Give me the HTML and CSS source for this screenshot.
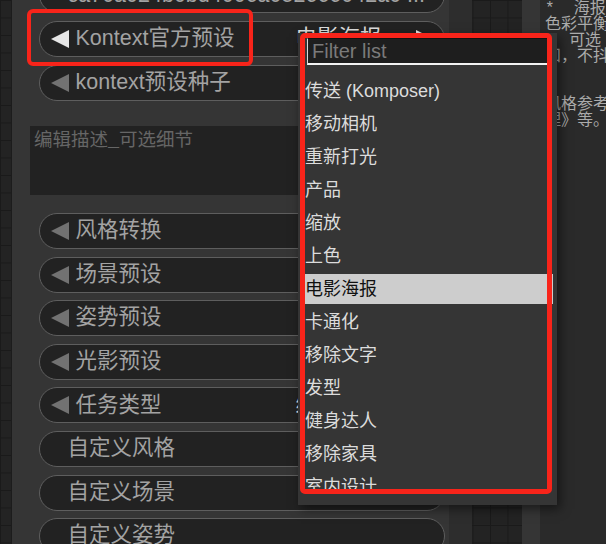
FILE: index.html
```html
<!DOCTYPE html>
<html lang="zh">
<head>
    <meta charset="UTF-8">
    <meta name="viewport" content="width=device-width, initial-scale=1.0">
    <title>Kontext 预设</title>
    <link rel="stylesheet" href="styles.css">
</head>
<body>
    <div class="canvas">
        <div class="node node-left">
            <div class="widget text-widget"><span class="label">ca70a024b0bd4006a052666042a0 ...</span></div>
            <div class="widget combo active">
                <svg class="arrow" viewBox="0 0 18 18"><polygon points="0,9 18,0 18,18"/></svg>
                <span class="label">Kontext官方预设</span>
                <span class="value">电影海报</span>
                <svg class="arrow arrow-right" viewBox="0 0 18 18"><polygon points="18,9 0,0 0,18"/></svg>
            </div>
            <div class="widget combo">
                <svg class="arrow" viewBox="0 0 18 18"><polygon points="0,9 18,0 18,18"/></svg>
                <span class="label">kontext预设种子</span>
                <span class="value">0</span>
                <svg class="arrow arrow-right" viewBox="0 0 18 18"><polygon points="18,9 0,0 0,18"/></svg>
            </div>
            <div class="textarea">编辑描述_可选细节</div>
            <div class="widget combo">
                <svg class="arrow" viewBox="0 0 18 18"><polygon points="0,9 18,0 18,18"/></svg>
                <span class="label">风格转换</span>
                <span class="value">无</span>
                <svg class="arrow arrow-right" viewBox="0 0 18 18"><polygon points="18,9 0,0 0,18"/></svg>
            </div>
            <div class="widget combo">
                <svg class="arrow" viewBox="0 0 18 18"><polygon points="0,9 18,0 18,18"/></svg>
                <span class="label">场景预设</span>
                <span class="value">无</span>
                <svg class="arrow arrow-right" viewBox="0 0 18 18"><polygon points="18,9 0,0 0,18"/></svg>
            </div>
            <div class="widget combo">
                <svg class="arrow" viewBox="0 0 18 18"><polygon points="0,9 18,0 18,18"/></svg>
                <span class="label">姿势预设</span>
                <span class="value">无</span>
                <svg class="arrow arrow-right" viewBox="0 0 18 18"><polygon points="18,9 0,0 0,18"/></svg>
            </div>
            <div class="widget combo">
                <svg class="arrow" viewBox="0 0 18 18"><polygon points="0,9 18,0 18,18"/></svg>
                <span class="label">光影预设</span>
                <span class="value">无</span>
                <svg class="arrow arrow-right" viewBox="0 0 18 18"><polygon points="18,9 0,0 0,18"/></svg>
            </div>
            <div class="widget combo">
                <svg class="arrow" viewBox="0 0 18 18"><polygon points="0,9 18,0 18,18"/></svg>
                <span class="label">任务类型</span>
                <span class="value">编辑图片</span>
                <svg class="arrow arrow-right" viewBox="0 0 18 18"><polygon points="18,9 0,0 0,18"/></svg>
            </div>
            <div class="widget text-widget"><span class="label">自定义风格</span></div>
            <div class="widget text-widget"><span class="label">自定义场景</span></div>
            <div class="widget text-widget"><span class="label">自定义姿势</span></div>
        </div>

        <div class="node node-right">
            <div class="note">
                <div class="note-line">*  海报风格</div>
                <div class="note-line">色彩平衡，</div>
                <div class="note-line">，　可选</div>
                <div class="note-line">和，不抖</div>
                <div class="note-line">&nbsp;</div>
                <div class="note-line">&nbsp;</div>
                <div class="note-line">风格参考</div>
                <div class="note-line">理》等。</div>
            </div>
        </div>

        <div class="menu">
            <input class="filter" type="text" placeholder="Filter list">
            <div class="menu-list">
                <div class="menu-item">传送 (Komposer)</div>
                <div class="menu-item">移动相机</div>
                <div class="menu-item">重新打光</div>
                <div class="menu-item">产品</div>
                <div class="menu-item">缩放</div>
                <div class="menu-item">上色</div>
                <div class="menu-item selected">电影海报</div>
                <div class="menu-item">卡通化</div>
                <div class="menu-item">移除文字</div>
                <div class="menu-item">发型</div>
                <div class="menu-item">健身达人</div>
                <div class="menu-item">移除家具</div>
                <div class="menu-item">室内设计</div>
                <div class="menu-item">换装</div>
            </div>
        </div>

        <!-- red marks drawn over the screenshot -->
        <div class="mark mark-pill"></div>
        <div class="mark mark-menu"></div>
    </div>
</body>
</html>
```

FILE: styles.css
```css
* {
    margin: 0;
    padding: 0;
    box-sizing: border-box;
}

body {
    width: 606px;
    height: 544px;
    overflow: hidden;
    font-family: "Liberation Sans", "Noto Sans CJK SC", sans-serif;
}

.canvas {
    position: relative;
    width: 606px;
    height: 544px;
    overflow: hidden;
    background-color: #232323;
    background-image:
        linear-gradient(#1a1a1a 1px, transparent 1px),
        linear-gradient(90deg, #1a1a1a 1px, transparent 1px);
    background-size: 17.5px 17.5px;
    background-position: 0 0;
}

.node {
    position: absolute;
}

.node-left {
    left: 11px;
    top: -22.6px;
    width: 461px;
    height: 600px;
    padding: 0 27px;
    display: flex;
    flex-direction: column;
    gap: 7.6px;
    background: linear-gradient(90deg, #353535 437px, #2d2d2d 437px);
    border-left: 1px solid #1c1c1c;
}

.widget {
    height: 36px;
    flex-shrink: 0;
    border: 1.5px solid #5e5e5e;
    border-radius: 18px;
    background-color: #222;
    display: flex;
    align-items: center;
    padding-left: 10.5px;
    font-size: 21.5px;
    line-height: 1;
    white-space: nowrap;
    overflow: hidden;
}

.text-widget {
    padding-left: 27.5px;
}

.label {
    color: #a3a3a3;
}

.value {
    margin-left: auto;
    color: #dddddd;
}

.arrow {
    width: 18px;
    height: 18px;
    flex-shrink: 0;
    margin-right: 7px;
    fill: #727272;
}

.arrow-right {
    margin: 0 10.5px 0 34px;
}

.active .arrow {
    fill: #e6e6e6;
}

.textarea {
    height: 69px;
    flex-shrink: 0;
    margin: 17.8px -9px 10.4px;
    padding: 5px 4px;
    background-color: #222;
    color: #666;
    font-family: "Liberation Mono", "Noto Sans CJK SC", monospace;
    font-size: 18.5px;
    line-height: 1.2;
}

.node-right {
    left: 522px;
    top: 0;
    width: 100px;
    height: 544px;
    padding-left: 18px;
    background-color: #353535;
}

.note {
    height: 100%;
    padding: 1px 0 0 5px;
    background-color: #2a2a2a;
    color: #ababab;
    font-family: "Liberation Mono", "Noto Sans CJK SC", monospace;
    font-size: 16px;
    line-height: 16px;
    overflow: hidden;
}

.note-line {
    height: 16px;
    white-space: pre;
}

.menu {
    position: absolute;
    left: 298px;
    top: 33px;
    width: 259px;
    height: 472px;
    padding-top: 5px;
    background-color: #353535;
    box-shadow: 3px 4px 10px rgba(0, 0, 0, 0.5);
}

.filter {
    display: block;
    width: 241px;
    height: 27px;
    margin-left: 9px;
    padding: 0 4px;
    background-color: #1e1e1e;
    border: 1px solid #d8d8d8;
    border-top-color: #111;
    border-bottom: 2px solid #f2f2f2;
    color: #ddd;
    font-family: "Liberation Sans", sans-serif;
    font-size: 20px;
    outline: none;
}

.filter::placeholder {
    color: #7a7a7a;
}

.menu-list {
    margin: 11px 4px 0 2px;
    height: 415px;
    overflow: hidden;
}

.menu-item {
    height: 30px;
    margin-bottom: 3px;
    padding-left: 5px;
    color: #dcdcdc;
    font-size: 18px;
    line-height: 30px;
    white-space: nowrap;
}

.menu-item.selected {
    background-color: #cdcdcd;
    color: #111;
}

.mark {
    position: absolute;
    border-style: solid;
    border-color: #f8241a;
}

.mark-pill {
    left: 27px;
    top: 9px;
    width: 226px;
    height: 57px;
    border-width: 4px;
    border-radius: 6px;
}

.mark-menu {
    left: 300px;
    top: 33px;
    width: 252px;
    height: 461px;
    border-width: 5px;
    border-radius: 5px;
}
```
